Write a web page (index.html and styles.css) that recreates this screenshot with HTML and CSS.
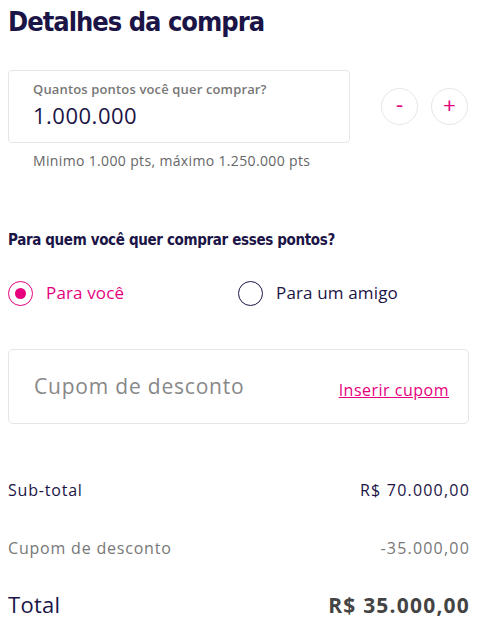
FILE: index.html
```html
<!DOCTYPE html>
<html lang="pt-BR">
<head>
<meta charset="utf-8">
<link rel="stylesheet" href="styles.css">
</head>
<body>
<main class="page">
  <h1 class="title">Detalhes da compra</h1>

  <div class="points-row">
    <div class="field">
      <label class="field-label">Quantos pontos você quer comprar?</label>
      <div class="field-value">1.000.000</div>
    </div>
    <div class="steppers">
      <button class="step">-</button>
      <button class="step step-plus">+</button>
    </div>
  </div>
  <p class="hint">Minimo 1.000 pts, máximo 1.250.000 pts</p>

  <h2 class="question">Para quem você quer comprar esses pontos?</h2>

  <div class="radios">
    <label class="radio radio-on"><span class="dot"></span>Para você</label>
    <label class="radio"><span class="dot"></span>Para um amigo</label>
  </div>

  <div class="coupon">
    <span class="coupon-placeholder">Cupom de desconto</span>
    <a class="coupon-link" href="#">Inserir cupom</a>
  </div>

  <div class="summary">
    <div class="line"><span class="name">Sub-total</span><span class="amount">R$ 70.000,00</span></div>
    <div class="line line-muted"><span class="name">Cupom de desconto</span><span class="amount">-35.000,00</span></div>
    <div class="line line-total"><span class="name">Total</span><strong class="amount">R$ 35.000,00</strong></div>
  </div>
</main>
</body>
</html>
```
FILE: styles.css
```css
* { box-sizing: border-box; }
body {
  margin: 0;
  background: #fff;
  font-family: "Open Sans", "Noto Sans", sans-serif;
  color: #1b1446;
}
.page {
  width: 489px;
  padding: 0 20px 0 8px;
}
.title {
  margin: 0;
  padding-top: 4px;
  font-family: "DejaVu Sans Condensed", "DejaVu Sans", sans-serif;
  font-stretch: condensed;
  font-weight: 700;
  font-size: 27px;
  line-height: 36px;
  color: #1b1446;
  letter-spacing: -1px;
}
.points-row {
  display: flex;
  align-items: center;
  margin-top: 30px;
}
.field {
  flex-shrink: 0;
  width: 342px;
  height: 73px;
  border: 1px solid #e6e6e6;
  border-radius: 4px;
  padding: 10px 0 0 24px;
}
.field-label {
  display: block;
  font-size: 13px;
  line-height: 16px;
  color: #777;
  font-weight: 600;
  letter-spacing: 0.15px;
}
.field-value {
  margin-top: 5px;
  font-size: 22px;
  line-height: 26px;
  color: #1b1446;
  letter-spacing: 0.5px;
}
.steppers {
  display: flex;
  gap: 13px;
  margin-left: 31px;
}
.step {
  flex-shrink: 0;
  width: 37px;
  height: 37px;
  border-radius: 50%;
  border: 1px solid #e6e6e6;
  background: #fff;
  color: #e6007e;
  font-family: "Lato", sans-serif;
  font-size: 22px;
  line-height: 1;
  padding: 0 0 3px;
}
.hint {
  margin: 8px 0 0 25px;
  font-size: 14px;
  line-height: 20px;
  color: #666;
  letter-spacing: 0.35px;
}
.question {
  margin: 59px 0 0;
  font-family: "DejaVu Sans Condensed", "DejaVu Sans", sans-serif;
  font-stretch: condensed;
  font-weight: 700;
  font-size: 15px;
  line-height: 20px;
  color: #1b1446;
  letter-spacing: -0.35px;
}
.radios {
  display: grid;
  grid-template-columns: 230px 1fr;
  margin-top: 30px;
}
.radio {
  display: flex;
  align-items: center;
  gap: 13px;
  font-size: 17px;
  line-height: 26px;
  color: #1b1446;
  letter-spacing: 0.15px;
}
.dot {
  width: 25px;
  height: 25px;
  border-radius: 50%;
  border: 1.5px solid #1b1446;
  display: flex;
  align-items: center;
  justify-content: center;
}
.radio-on { color: #e6007e; }
.radio-on .dot { border-color: #e6007e; }
.radio-on .dot::after {
  content: "";
  width: 11px;
  height: 11px;
  border-radius: 50%;
  background: #e6007e;
}
.coupon {
  margin-top: 43px;
  height: 75px;
  border: 1px solid #e6e6e6;
  border-radius: 5px;
  display: flex;
  align-items: center;
  justify-content: space-between;
  padding: 0 19px 0 25px;
}
.coupon-placeholder {
  font-size: 21px;
  color: #888;
  margin-top: -1px;
  letter-spacing: 0.8px;
}
.coupon-link {
  color: #e6007e;
  font-size: 16px;
  margin-top: 7px;
  letter-spacing: 0.5px;
}
.summary {
  margin-top: 45px;
}
.line {
  display: flex;
  justify-content: space-between;
  align-items: baseline;
  font-size: 16px;
  line-height: 42px;
  color: #1b1446;
}
.line .name { letter-spacing: 0.8px; }
.line .amount { letter-spacing: 1.2px; margin-right: -1px; }
.line + .line { margin-top: 16px; }
.line + .line-total { margin-top: 14px; }
.line-muted { color: #777; }
.line-total {
  font-size: 22px;
  color: #1b1446;
}
.line-total .name { letter-spacing: 0.3px; }
.line-total strong {
  color: #444;
  font-weight: 700;
  font-size: 21px;
  letter-spacing: 1.7px;
}
```
